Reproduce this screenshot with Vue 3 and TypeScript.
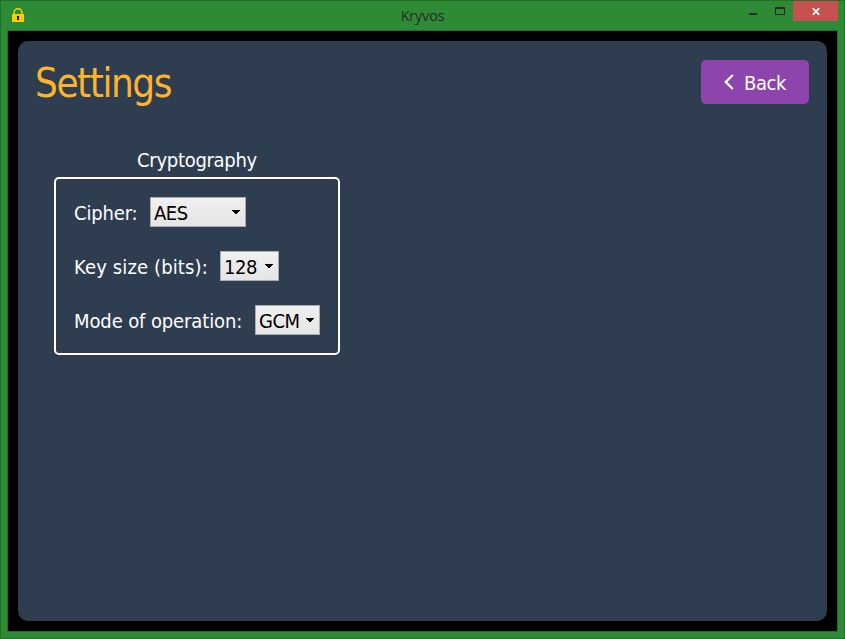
<script setup lang="ts">
interface Setting {
  id: string
  label: string
  value: string
}

const settings: Setting[] = [
  { id: 'cipher', label: 'Cipher:', value: 'AES' },
  { id: 'keysize', label: 'Key size (bits):', value: '128' },
  { id: 'mode', label: 'Mode of operation:', value: 'GCM' },
]
</script>

<template>
  <div class="window">
    <header class="titlebar">
      <svg class="lock" width="12" height="14" viewBox="0 0 12 14">
        <path d="M2.1 7V4.3a3.9 3.6 0 0 1 7.8 0V7" fill="none" stroke="#f4cf0a" stroke-width="1.5" />
        <rect y="6" width="12" height="8" rx=".5" fill="#fc0" />
        <path d="M5 8h2v2H6.700V11H7v1H5v-1h.3v-1H5z" fill="#000" />
      </svg>
      <span class="title">Kryvos</span>
      <div class="controls">
        <svg width="46" height="20" viewBox="0 0 46 20" shape-rendering="crispEdges">
          <rect x="2" y="12" width="8" height="2" fill="#2a2a2a" />
          <path d="M28 6h10v8H28zM29 8v5h8V8z" fill="#2a2a2a" fill-rule="evenodd" />
        </svg>
        <button class="close" aria-label="Close">
          <svg width="8" height="7" viewBox="0 0 8 7">
            <path d="M.8.2 7.200 6.800M7.200.2.8 6.800" stroke="#fff" stroke-width="1.8" />
          </svg>
        </button>
      </div>
    </header>
    <div class="client">
      <main class="panel">
        <div class="heading">
          <h1>Settings</h1>
          <button class="back">
            <svg width="10" height="16" viewBox="0 0 10 16">
              <path d="M8.800 1 1.800 8l7 7" fill="none" stroke="#fff" stroke-width="2.300" />
            </svg>
            <span>Back</span>
          </button>
        </div>
        <section class="group">
          <h2>Cryptography</h2>
          <div class="box">
            <div v-for="s in settings" :key="s.id" class="row">
              <span class="label" :class="s.id">{{ s.label }}</span>
              <div class="combo" :class="s.id">
                <span>{{ s.value }}</span>
                <svg width="8" height="4" viewBox="0 0 8 4" shape-rendering="crispEdges">
                  <path d="M0 0h8v1H7v1H6v1H5v1H3V3H2V2H1V1H0z" />
                </svg>
              </div>
            </div>
          </div>
        </section>
      </main>
    </div>
  </div>
</template>

<style>
body {
  margin: 0;
}
</style>

<style scoped>
* {
  box-sizing: border-box;
}
.window {
  width: 845px;
  height: 639px;
  display: flex;
  flex-direction: column;
  background: #2e8b35;
  border: 1px solid #246e2a;
  padding: 0 6px 6px;
  font-family: 'DejaVu Sans Condensed', 'DejaVu Sans', sans-serif;
  font-stretch: condensed;
  font-size: 20px;
  line-height: 24px;
  white-space: nowrap;
}
.titlebar {
  height: 29px;
  display: grid;
  grid-template-columns: 100px 1fr 100px;
  align-items: start;
}
.lock {
  margin: 7px 0 0 5px;
}
.title {
  font-family: 'Open Sans', sans-serif;
  font-stretch: normal;
  font-size: 14.5px;
  line-height: 20px;
  color: #242c25;
  text-align: center;
  margin-top: 5px;
  letter-spacing: -0.2px;
}
.controls {
  display: flex;
  justify-content: flex-end;
}
button {
  border: 0;
  padding: 0;
  font: inherit;
  color: #fff;
}
.close {
  width: 45px;
  height: 20px;
  background: #c75050;
  display: flex;
  align-items: center;
  justify-content: center;
  padding-top: 1px;
}
.client {
  flex: 1;
  background: #000;
  border: 1px solid #246e2a;
  padding: 10px 10px 10px;
  display: flex;
}
.panel {
  flex: 1;
  background: #2e3e50;
  border-radius: 10px;
  padding: 19px 18px 18px;
  color: #fff;
}
.heading {
  display: flex;
  justify-content: space-between;
}
h1 {
  margin: 0 0 0 -1px;
  font-weight: 400;
  font-size: 40px;
  line-height: 46px;
  letter-spacing: -1.45px;
  color: #fdb32b;
}
.back {
  width: 108px;
  height: 44px;
  border-radius: 5px;
  background: #8e44ad;
  display: flex;
  align-items: center;
  padding-left: 23px;
  gap: 10px;
}
.back span {
  letter-spacing: -0.4px;
  padding-top: 2px;
}
.group {
  width: 286px;
  margin: 42px 0 0 18px;
}
h2 {
  margin: 0;
  height: 29px;
  font-weight: 400;
  font-size: 20px;
  line-height: 25px;
  letter-spacing: -0.3px;
  text-align: center;
}
.box {
  height: 178px;
  border: 2px solid #fff;
  border-radius: 5px;
  padding: 18px;
  display: flex;
  flex-direction: column;
  gap: 24px;
}
.row {
  height: 30px;
  display: flex;
  align-items: center;
}
.label {
  padding-top: 2px;
}
.label.cipher {
  width: 76px;
  letter-spacing: -0.15px;
}
.label.keysize {
  width: 146px;
  letter-spacing: 0.13px;
}
.label.mode {
  width: 181px;
  letter-spacing: -0.11px;
}
.combo {
  height: 30px;
  border: 1px solid #acacac;
  background: linear-gradient(#f0f0f0, #e5e5e5);
  color: #000;
  display: flex;
  align-items: center;
  justify-content: space-between;
  padding: 0 5px 0 3px;
}
.combo span {
  padding-top: 2px;
  letter-spacing: -0.5px;
}
.combo.cipher {
  width: 96px;
}
.combo.keysize {
  width: 59px;
}
.combo.mode {
  width: 65px;
}
</style>
